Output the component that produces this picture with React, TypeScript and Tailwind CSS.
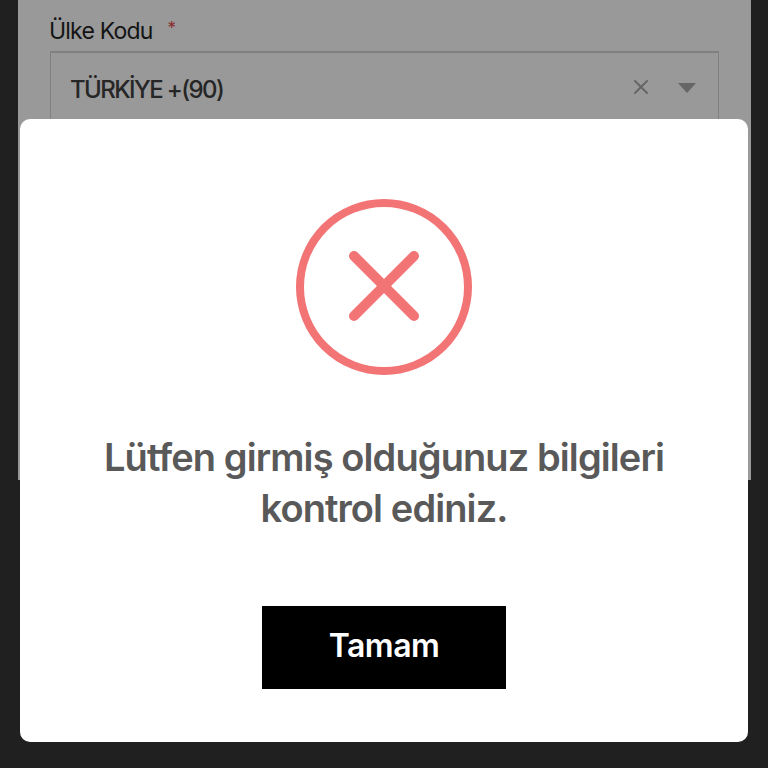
import React from 'react';
import { X } from 'lucide-react';

const font = { fontFamily: 'Inter, sans-serif' };

export default function App() {
  return (
    <div className="relative h-[768px] w-[768px] overflow-hidden bg-[#202020]" style={font}>
      {/* Form behind the dialog */}
      <div className="ml-[18px] h-[480px] w-[733px] bg-[#999999] px-[32px] pt-[16px]">
        <div className="-ml-px flex h-[30px] items-center gap-[15px] text-[23px] leading-none tracking-[-0.8px] text-[#141414]">
          <span>Ülke Kodu</span>
          <span className="mb-[6px] text-[17px] text-[#8a2a2a]">*</span>
        </div>
        <div className="mt-[5px] flex h-[76px] items-center justify-between border border-t-2 border-[#808080] pl-[19px] pr-[22px]">
          <span className="text-[24px] font-medium tracking-[-1.6px] text-[#262626]">TÜRKİYE +(90)</span>
          <div className="flex items-center gap-[25px] pb-[6px]">
            <X size={24} strokeWidth={2} className="text-[#666666]" />
            <span className="mt-[3px] h-0 w-0 border-x-[9px] border-t-[10px] border-x-transparent border-t-[#666666]" />
          </div>
        </div>
      </div>

      {/* Error dialog */}
      <div className="absolute left-[20px] top-[119px] flex h-[623px] w-[728px] flex-col items-center rounded-[10px] bg-white pt-[80px]">
        <svg width="176" height="176" viewBox="0 0 176 176" fill="none" stroke="#f27474" strokeLinecap="round">
          <circle cx="88" cy="88" r="84" strokeWidth="8" />
          <path d="M58 57 L118 117 M118 57 L58 117" strokeWidth="10" />
        </svg>
        <p className="mt-[57px] w-[600px] text-center text-[38px] font-semibold leading-[51px] tracking-[-0.9px] text-[#595959]">
          Lütfen girmiş olduğunuz bilgileri kontrol ediniz.
        </p>
        <button className="mt-[72px] flex h-[83px] w-[244px] items-center justify-center bg-black pb-[4px] text-[32px] font-semibold tracking-[-0.5px] text-white">
          Tamam
        </button>
      </div>
    </div>
  );
}
